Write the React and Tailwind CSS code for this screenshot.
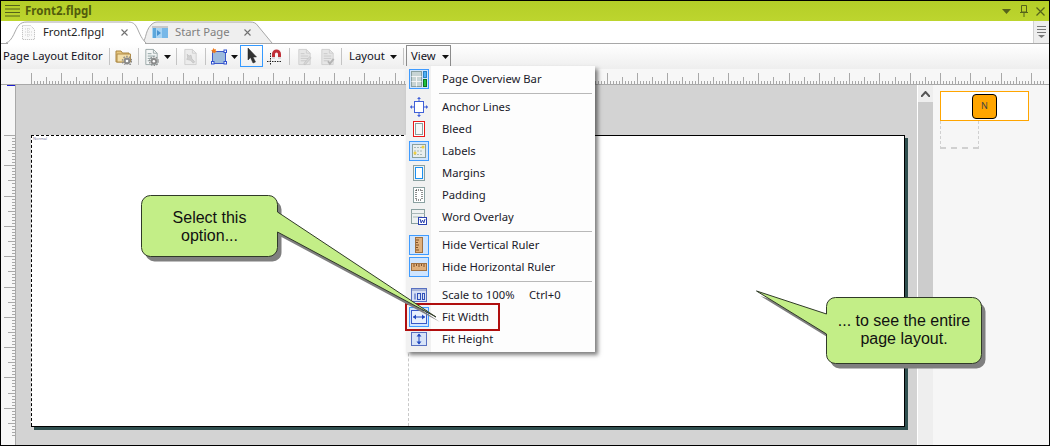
import React from 'react';

const tickColor = '#a8a8a8';

const RulerTop = () => {
    const ticks = Array.from({ length: 335 }, (_, i) => {
        const x = Math.round(30 + i * 3.03);
        const h = i % 10 === 0 ? 11 : i % 5 === 0 ? 7 : 3;
        return <rect key={i} x={x} y={15 - h} width="1" height={h} fill={tickColor} />;
    });
    return <svg width="1048" height="15">{ticks}</svg>;
};

const RulerLeft = () => {
    const ticks = Array.from({ length: 100 }, (_, i) => {
        const y = Math.round(50 + i * 3.03);
        const w = i % 10 === 0 ? 11 : i % 5 === 0 ? 7 : 3;
        return <rect key={i} x={14 - w} y={y} width={w} height="1" fill={tickColor} />;
    });
    return <svg width="14" height="360" className="absolute left-0 top-0">{ticks}</svg>;
};

const Caret = ({ className = '' }) => (
    <svg width="7" height="4" className={className}><path d="M0 0h7L3.5 4z" fill="#111" /></svg>
);

const Sep = ({ className = '' }) => <div className={`w-px h-[17px] bg-[#c4c4c4] ${className}`} />;

const CloseX = () => (
    <svg width="7" height="7" viewBox="0 0 7 7">
        <path d="M.5.5l6 6M6.500.5l-6 6" stroke="#707070" strokeWidth="1.100" />
    </svg>
);

const Gear = ({ x, y }) => (
    <g>
        <circle cx={x} cy={y} r="3.4" fill="#8a8a8a" />
        <circle cx={x} cy={y} r="4.6" fill="none" stroke="#8a8a8a" strokeWidth="1.4" strokeDasharray="1.5 1.4" />
        <circle cx={x} cy={y} r="1.3" fill="#fff" />
    </g>
);

const FolderIcon = () => (
    <svg width="17" height="17" viewBox="0 0 17 17">
        <path d="M1 3h5l1.500 2H14v9H1z" fill="#e8c77e" stroke="#a98540" />
        <path d="M2 6h13.500v8H2z" fill="#f4dfa8" stroke="#b08c48" />
        <Gear x="12" y="13" />
    </svg>
);

const DocLines = ({ stroke = '#9aa8a8', fill = '#f4f6f6', line = '#8ca0a0' }) => (
    <g>
        <path d="M1.500 1.500h8l4 4v12h-12z" fill={fill} stroke={stroke} />
        <path d="M9.500 1.500v4h4" fill="none" stroke={stroke} />
        <path d="M3.500 6h4M3.500 8.500h8M3.500 11h8M3.500 13.500h6" stroke={line} />
    </g>
);

const DocGearIcon = () => (
    <svg width="15" height="18" viewBox="0 0 15 19"><DocLines /><Gear x="10" y="14" /></svg>
);

const WrenchDocIcon = () => (
    <svg width="15" height="18" viewBox="0 0 15 19">
        <DocLines stroke="#cfcfcf" fill="#ececec" line="#ececec" />
        <path d="M4 6.500l2 2 2-1 1 4 3 3-1.500 1.500-3-3-4-1 1-2z" fill="#d0d0d0" stroke="#bdbdbd" strokeWidth=".7" />
    </svg>
);

const ShapeIcon = () => (
    <svg width="16" height="17" viewBox="0 0 16 17">
        <rect x="1.500" y="3.500" width="13" height="12" fill="#9dbbdc" stroke="#3c58c8" />
        <g fill="#fff" stroke="#2f50d0">
            <rect x=".5" y="13.500" width="2.500" height="2.500" />
            <rect x="13" y="13.500" width="2.500" height="2.500" />
            <rect x="13" y="2" width="2.500" height="2.500" />
        </g>
        <path d="M2.500 0l1 1.500L5 1l-.5 1.500L6 3.500 4.500 4 4 5.500 3 4.500 1 5l.5-1.500L0 2.500 1.500 2z" fill="#f07818" />
    </svg>
);

const ArrowIcon = () => (
    <svg width="10" height="16" viewBox="0 0 10 16">
        <path d="M1 0v12l2.500-2.500L6 15l2.500-1-2.500-5h3.500z" fill="#333" stroke="#222" strokeWidth=".5" />
    </svg>
);

const MagnetIcon = () => (
    <svg width="15" height="16" viewBox="0 0 15 16">
        <path d="M5 10V5a4.500 4.500 0 0 1 9 0v5h-3V5a1.500 1.500 0 0 0-3 0v5z" fill="#c03038" />
        <path d="M5 8h3v2H5zM11 8h3v2h-3z" fill="#dcdcdc" />
        <path d="M0 12.500h15M3.500 4v12" stroke="#222" strokeDasharray="1.500 1" />
    </svg>
);

const DocPen = ({ check }) => (
    <svg width="15" height="18" viewBox="0 0 15 19">
        <DocLines stroke="#cfcfcf" fill="#e6e6e6" line="#c8c8c8" />
        {check
            ? <path d="M8 14l2 2.500 4-5" fill="none" stroke="#b4b4b4" strokeWidth="2" />
            : <path d="M7 16l6-7 1.500 1.500-6 7H7z" fill="#d6d6d6" stroke="#bdbdbd" strokeWidth=".6" />}
    </svg>
);

const HamburgerIcon = () => (
    <svg width="16" height="12" viewBox="0 0 16 12">
        <path d="M0 .5h15M0 4h15M0 7.500h15M0 11h15" stroke="#55631a" />
    </svg>
);

const TabDoc = () => (
    <svg width="13" height="15" viewBox="0 0 13 15">
        <path d="M.5.5h8l4 4v10H.5z" fill="#fafafa" stroke="#b8b8b8" strokeDasharray="1 1" />
        <path d="M3 4h6M3 7h7M3 10h7M6 3v10" stroke="#cfcfcf" strokeDasharray="1 1" />
    </svg>
);

const StartIcon = () => (
    <svg width="16" height="12" viewBox="0 0 16 12">
        <rect width="16" height="12" fill="#a8d4f4" />
        <rect x="10" y="2" width="6" height="10" fill="#78b8e8" />
        <rect width="16" height="2" fill="#c8c8c8" />
        <path d="M1 2h3v10H1z" fill="#5ea8dc" />
        <path d="M5 4l4 3-4 3z" fill="#4a94d0" />
    </svg>
);

// menu icons, 20x20
const Icon = ({ children }) => (
    <svg width="20" height="20" viewBox="0 0 20 20">{children}</svg>
);

const Hi = () => <rect x=".5" y=".5" width="19" height="19" fill="#cfe5ff" stroke="#3f9bff" />;

const menuIcons = {
    overview: (
        <Icon>
            <Hi />
            <rect x="2.500" y="2.500" width="10" height="15" fill="#c8d4d4" stroke="#8aa0a0" />
            <path d="M2.500 7.500h10M7.500 7.500v10M2.500 12.500h10" stroke="#f4f4f4" />
            <rect x="14.500" y="2.500" width="3" height="6" fill="#4eb0f4" stroke="#2e80c0" />
            <rect x="14.500" y="10.500" width="3" height="7" fill="#1ec03c" stroke="#107020" />
        </Icon>
    ),
    anchor: (
        <Icon>
            <rect x="5.500" y="4.500" width="9" height="11" fill="#fff" stroke="#4060d8" />
            <path d="M10 .5v4M10 15.500v4M1.500 10h4M14.500 10h4" stroke="#4060d8" />
            <path d="M8 2h4l-2-2zM8 18h4l-2 2zM3 8v4l-2-2zM17 8v4l2-2z" fill="#4060d8" />
        </Icon>
    ),
    bleed: (
        <Icon>
            <rect x="4.500" y="2.500" width="11" height="15" fill="#fff" stroke="#e81818" />
            <rect x="6.500" y="4.500" width="7" height="11" fill="#f4f8f8" stroke="#8aa0a0" />
        </Icon>
    ),
    labels: (
        <Icon>
            <Hi />
            <rect x="3.500" y="3.500" width="13" height="13" fill="#e8eeee" stroke="#8aa0a0" />
            <path d="M5 6.500h9M5 10h9M5 13.500h9" stroke="#a8b8b8" strokeDasharray="2 1" />
            <circle cx="14" cy="6" r="1.500" fill="#f0d040" />
            <circle cx="6" cy="12" r="1.500" fill="#f0d040" />
        </Icon>
    ),
    margins: (
        <Icon>
            <rect x="4.500" y="2.500" width="11" height="15" fill="#eef2f2" stroke="#8aa0a0" />
            <rect x="6.500" y="4.500" width="7" height="11" fill="#fff" stroke="#1c90f0" />
        </Icon>
    ),
    padding: (
        <Icon>
            <rect x="4.500" y="2.500" width="11" height="15" fill="#fff" stroke="#8aa0a0" />
            <path d="M7 5h6M7 15h6M7 5v10M13 5v10" fill="none" stroke="#222" strokeDasharray="1 1" />
        </Icon>
    ),
    word: (
        <Icon>
            <rect x="2.500" y="2.500" width="13" height="14" fill="#eef2f2" stroke="#8aa0a0" />
            <path d="M2.500 6.500h13M4 10h9" stroke="#a8b8b8" />
            <rect x="9.500" y="10.500" width="8" height="7" fill="#fff" stroke="#2840b0" />
            <path d="M11 12l1.200 4 1.300-3 1.300 3 1.200-4" fill="none" stroke="#2840b0" />
        </Icon>
    ),
    vruler: (
        <Icon>
            <Hi />
            <rect x="6.500" y="2.500" width="7" height="15" fill="#e0b07c" stroke="#a07040" />
            <path d="M7 5h3M7 7.500h2M7 10h3M7 12.500h2M7 15h3" stroke="#805028" />
        </Icon>
    ),
    hruler: (
        <Icon>
            <Hi />
            <rect x="2.500" y="6.500" width="15" height="7" fill="#e0b07c" stroke="#a07040" />
            <path d="M5 7v3M7.500 7v2M10 7v3M12.500 7v2M15 7v3" stroke="#805028" />
        </Icon>
    ),
    scale: (
        <Icon>
            <rect x="2.500" y="3.500" width="15" height="13" fill="#d8e0f4" stroke="#5870c0" />
            <rect x="3" y="4" width="14" height="2" fill="#a8b4d8" />
            <path d="M6 8.500v6" stroke="#3050b8" />
            <rect x="8.500" y="8.500" width="3" height="6" fill="none" stroke="#3050b8" />
            <rect x="13.500" y="8.500" width="2" height="6" fill="none" stroke="#3050b8" />
        </Icon>
    ),
    fitw: (
        <Icon>
            <Hi />
            <rect x="2.500" y="3.500" width="15" height="13" fill="#e8f0fc" stroke="#3858c8" />
            <path d="M4 10h12" stroke="#2048c0" />
            <path d="M7 7.500v5L4 10zM13 7.500v5l3-2.500z" fill="#2048c0" />
        </Icon>
    ),
    fith: (
        <Icon>
            <rect x="2.500" y="3.500" width="15" height="13" fill="#d8e4f8" stroke="#5870c0" />
            <path d="M10 5v10" stroke="#2048c0" />
            <path d="M7.500 7.500h5L10 4.500zM7.500 12.500h5L10 15.500z" fill="#2048c0" />
        </Icon>
    ),
};

const MenuRow = ({ icon, label, shortcut }) => (
    <div className="flex h-[22px] items-center">
        <div className="flex w-[25px] shrink-0 justify-center">{icon && menuIcons[icon]}</div>
        <span className="ml-[11px] w-[87px] whitespace-nowrap">{label}</span>
        {shortcut && <span className="whitespace-nowrap">{shortcut}</span>}
    </div>
);

const MenuSep = () => (
    <div className="flex h-[6px]">
        <div className="w-[25px] shrink-0" />
        <div className="ml-[8px] mt-[3px] h-px w-[153px] bg-[#b8b8b8]" />
    </div>
);

const ViewMenu = () => (
    <div className="absolute left-[405px] top-[65px] z-10 h-[286px] w-[189px] bg-[linear-gradient(to_right,#f1f1f1_25px,#fdfdfd_25px)] pt-[2px] text-[11.25px] text-[#1a1a2a] shadow-[3px_3px_4px_rgba(0,0,0,0.5)]">
        <MenuRow icon="overview" label="Page Overview Bar" />
        <MenuSep />
        <MenuRow icon="anchor" label="Anchor Lines" />
        <MenuRow icon="bleed" label="Bleed" />
        <MenuRow icon="labels" label="Labels" />
        <MenuRow icon="margins" label="Margins" />
        <MenuRow icon="padding" label="Padding" />
        <MenuRow icon="word" label="Word Overlay" />
        <MenuSep />
        <MenuRow icon="vruler" label="Hide Vertical Ruler" />
        <MenuRow icon="hruler" label="Hide Horizontal Ruler" />
        <MenuSep />
        <MenuRow icon="scale" label="Scale to 100%" shortcut="Ctrl+0" />
        <MenuRow icon="fitw" label="Fit Width" />
        <MenuRow icon="fith" label="Fit Height" />
    </div>
);

const leftCallout = 'M9.500 .5H127.500a9 9 0 0 1 9 9V17L295 122 136.500 37V52.500a9 9 0 0 1-9 9H9.500a9 9 0 0 1-9-9V9.500a9 9 0 0 1 9-9z';
const rightCallout = 'M79.500 7.500H216.500a9 9 0 0 1 9 9V64.500a9 9 0 0 1-9 9H79.500a9 9 0 0 1-9-9V44L.5 1 70.500 24V16.500a9 9 0 0 1 9-9z';

const Callout = ({ className, width, height, path, textClass, children }) => (
    <div className={`absolute z-20 ${className}`}>
        <svg width={width} height={height} className="block">
            <path d={path} fill="#7f7f7f" transform="translate(4 5)" />
            <path d={path} fill="#c3ee87" stroke="#303a28" />
        </svg>
        <div className={`absolute text-center font-['Liberation_Sans',sans-serif] text-[16px] leading-[18px] text-[#111] ${textClass}`}>
            {children}
        </div>
    </div>
);

const App = () => {
    return (
        <div className="relative flex h-[446px] w-[1050px] flex-col overflow-hidden border border-black bg-white font-['Noto_Sans',sans-serif]">
            {/* title bar */}
            <div className="flex h-[20px] shrink-0 items-center bg-[linear-gradient(to_bottom,#b4ce28,#bdd52e)] pl-[4px] pr-[3px]">
                <HamburgerIcon />
                <span className="ml-[4px] text-[11.5px] font-bold leading-none text-[#515c0c]">Front2.flpgl</span>
                <div className="ml-auto flex items-center text-[#55631a]">
                    <svg width="9" height="5"><path d="M0 0h9L4.500 5z" fill="#55631a" /></svg>
                    <svg width="8" height="12" viewBox="0 0 8 12" className="ml-[9px]">
                        <path d="M1.500.5h5v6.500h-5zM0 7.500h8M4 8v4" fill="none" stroke="#55631a" />
                    </svg>
                    <svg width="9" height="9" viewBox="0 0 9 9" className="ml-[8px] mr-[1px]">
                        <path d="M.5.5l8 8M8.500.5l-8 8" stroke="#55631a" strokeWidth="1.200" />
                    </svg>
                </div>
            </div>

            {/* tabs */}
            <div className="relative flex h-[23px] shrink-0 items-center border-b border-[#a8a8a8] text-[11.25px]">
                <svg width="290" height="23" className="absolute left-0 top-0">
                    <path d="M139 22C146 22 143 11 150 4 153 1 155 1 158 1H249C253 1 255 2 257 5L271 22" fill="#efefef" stroke="#a8a8a8" />
                    <path d="M5 22C12 20 14 8 18 4 20 2 22 1 26 1H126C131 1 133 2 135 5 138 10 139 16 145 22" fill="#fff" stroke="#a8a8a8" />
                    <rect x="7" y="22" width="137" height="1" fill="#fff" />
                </svg>
                <div className="relative ml-[21px] flex items-center">
                    <TabDoc />
                    <span className="ml-[8px] w-[60px] whitespace-nowrap text-[#222]">Front2.flpgl</span>
                    <div className="ml-[18px]"><CloseX /></div>
                </div>
                <div className="relative ml-[24px] flex items-center">
                    <StartIcon />
                    <span className="ml-[7px] w-[54px] whitespace-nowrap text-[#808080]">Start Page</span>
                    <div className="ml-[15px]"><CloseX /></div>
                </div>
                <div className="ml-auto flex h-[22px] w-[16px] flex-col items-center gap-[2px] self-start border-l border-[#d0d0d0] bg-[#eeeeee] pt-[5px]">
                    <div className="h-px w-[9px] bg-[#777]" />
                    <div className="h-px w-[9px] bg-[#777]" />
                    <div className="h-px w-[9px] bg-[#777]" />
                    <svg width="7" height="3"><path d="M0 0h7L3.500 3z" fill="#777" /></svg>
                </div>
            </div>

            {/* toolbar */}
            <div className="flex h-[25px] shrink-0 items-center bg-[linear-gradient(to_bottom,#ffffff,#eeeeee)] text-[11.25px] text-[#111122]">
                <span className="ml-[2px] w-[100px] whitespace-nowrap">Page Layout Editor</span>
                <Sep className="ml-[6px]" />
                <div className="ml-[5px]"><FolderIcon /></div>
                <Sep className="ml-[6px]" />
                <div className="ml-[5px]"><DocGearIcon /></div>
                <Caret className="ml-[5px]" />
                <Sep className="ml-[5px]" />
                <div className="ml-[6px]"><WrenchDocIcon /></div>
                <Sep className="ml-[7px]" />
                <div className="ml-[5px]"><ShapeIcon /></div>
                <Caret className="ml-[4px]" />
                <div className="ml-[2px] mt-px flex h-[22px] w-[23px] items-center justify-center self-start border border-[#3399ff]">
                    <ArrowIcon />
                </div>
                <div className="ml-[4px]"><MagnetIcon /></div>
                <Sep className="ml-[7px]" />
                <div className="ml-[7px]"><DocPen /></div>
                <div className="ml-[8px]"><DocPen check /></div>
                <Sep className="ml-[6px]" />
                <span className="ml-[7px] w-[36px]">Layout</span>
                <Caret className="ml-[5px]" />
                <Sep className="ml-[6px]" />
                <div className="ml-[2px] mt-px flex h-[22px] w-[45px] items-center self-start border border-b-0 border-[#8c8c8c] pl-[4px]">
                    <span className="w-[27px]">View</span>
                    <Caret className="ml-[4px]" />
                </div>
            </div>

            {/* top ruler */}
            <div className="h-[16px] shrink-0 border-b border-[#a8a8a8] bg-[#f7f7f7]">
                <RulerTop />
            </div>

            <div className="flex min-h-0 flex-1">
                {/* left ruler */}
                <div className="relative w-[15px] shrink-0 border-r border-[#a8a8a8] bg-[#f7f7f7]">
                    <RulerLeft />
                    <div className="absolute right-0 top-0 h-px w-[8px] bg-[#1c1cd0]" />
                </div>

                {/* canvas */}
                <div className="flex-1 bg-[#d3d3d3] pl-[15px] pt-[50px]">
                    <div className="flex h-[292px] w-[874px] border-b border-r border-black bg-white shadow-[3px_3px_0_#2f4f4f]">
                        <div className="relative w-[378px] border-l border-r border-t border-dashed border-l-black border-r-[#c8c8c8] border-t-black">
                            <span className="absolute left-[1px] top-[1px] text-[4px] leading-none text-[#7a7aa0]">Normal</span>
                        </div>
                        <div className="flex-1 border-t border-black" />
                    </div>
                </div>

                {/* scrollbar */}
                <div className="flex w-[16px] shrink-0 flex-col border-l border-white bg-[#eeeeee]">
                    <div className="flex h-[17px] items-center justify-center">
                        <svg width="9" height="6" viewBox="0 0 9 6"><path d="M0 6l4.500-5L9 6" fill="none" stroke="#555" strokeWidth="2" /></svg>
                    </div>
                    <div className="h-[253px] bg-[#cccccc]" />
                </div>

                {/* page overview */}
                <div className="relative w-[116px] shrink-0 bg-[#f6f6f6]">
                    <div className="absolute left-[7px] top-[6px] h-[58px] w-[39px] border-b-2 border-l border-r border-dashed border-[#d0d0d0]" />
                    <div className="absolute left-[7px] top-[6px] flex h-[30px] w-[89px] items-center justify-center border border-[#ffa500] bg-white">
                        <div className="flex h-[25px] w-[25px] items-center justify-center rounded-[4px] border border-black bg-[#ffa500] text-[9px] text-[#444]">N</div>
                    </div>
                </div>
            </div>

            <ViewMenu />
            <div className="absolute left-[404px] top-[302px] z-20 h-[28px] w-[95px] border-2 border-[#b00f0f]" />

            <Callout
                className="left-[140px] top-[194px]"
                width="302"
                height="130"
                path={leftCallout}
                textClass="left-0 top-[14px] w-[137px]"
            >
                Select this<br />option...
            </Callout>

            <Callout
                className="left-[755px] top-[289px]"
                width="236"
                height="84"
                path={rightCallout}
                textClass="left-[70px] top-[22px] w-[156px]"
            >
                ... to see the entire<br />page layout.
            </Callout>
        </div>
    );
};

export default App;
